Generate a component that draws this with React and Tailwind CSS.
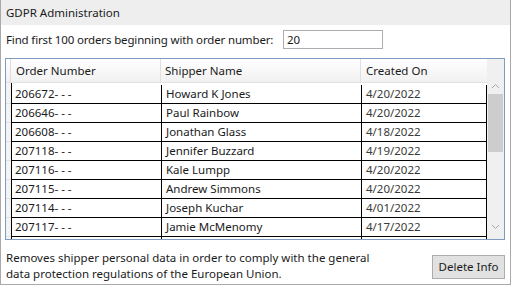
import React from "react";

const rows = [
  ["206672- - -", "Howard K Jones", "4/20/2022"],
  ["206646- - -", "Paul Rainbow", "4/20/2022"],
  ["206608- - -", "Jonathan Glass", "4/18/2022"],
  ["207118- - -", "Jennifer Buzzard", "4/19/2022"],
  ["207116- - -", "Kale Lumpp", "4/20/2022"],
  ["207115- - -", "Andrew Simmons", "4/20/2022"],
  ["207114- - -", "Joseph Kuchar", "4/01/2022"],
  ["207117- - -", "Jamie McMenomy", "4/17/2022"],
];

function Chevron({ up }) {
  return (
    <svg width="9" height="6" viewBox="0 0 9 6">
      <polyline
        points={up ? "1,5 4.5,1.5 8,5" : "1,1 4.5,4.5 8,1"}
        fill="none"
        stroke="#a8a8a8"
        strokeWidth="1"
      />
    </svg>
  );
}

export default function App() {
  return (
    <div
      className="w-[511px] h-[286px] bg-white text-[#1a1a1a] text-[11.5px] leading-[16px]"
      style={{ fontFamily: '"Noto Sans", "Segoe UI", sans-serif' }}
    >
      <div className="w-[511px] h-[285px] border border-t-0 border-[#a9a9a9] flex flex-col">
        <div className="h-[25px] bg-[#eeeeee] flex items-center pl-[5px] shrink-0">
          GDPR Administration
        </div>
        <div className="flex items-center pt-[5px] pl-[5px] h-[24px] shrink-0">
          <span className="w-[277px] shrink-0 whitespace-nowrap tracking-[-0.15px]">
            Find first 100 orders beginning with order number:
          </span>
          <div className="w-[100px] h-[19px] border border-[#abadb3] flex items-center pl-[3px]">20</div>
        </div>
        <div className="ml-[4px] mt-[9px] w-[500px] h-[182px] border border-[#7f9bbf] flex shrink-0 overflow-hidden">
          <div className="w-[481px] flex flex-col">
            <div className="h-[24px] flex shrink-0 bg-gradient-to-b from-white to-[#f1f1f1] border-b border-[#dfe3e8]">
              <div className="w-[5px] border-r border-[#dcdcdc]" />
              <div className="w-[150px] border-r border-[#e0e0e0] pl-[5px] flex items-center">Order Number</div>
              <div className="w-[200px] border-r border-[#e0e0e0] pl-[4px] flex items-center">Shipper Name</div>
              <div className="w-[125px] pl-[5px] flex items-center">Created On</div>
            </div>
            <div className="h-[2px] shrink-0 flex">
              <div className="w-[5px] bg-[#f3f3f3]" />
              <div className="w-[151px] border-l border-black" />
            </div>
            {rows.map((r, i) => (
              <div key={i} className="h-[19px] flex shrink-0">
                <div className="w-[5px] bg-[#f3f3f3] border-b border-[#e2e2e2]" />
                <div className="w-[151px] border-l border-r border-b border-black pl-[3px] flex items-center">{r[0]}</div>
                <div className="w-[200px] border-r border-b border-black pl-[4px] flex items-center">{r[1]}</div>
                <div className="w-[125px] border-r border-b border-black pl-[4px] flex items-center text-[#3a3a3a]">{r[2]}</div>
              </div>
            ))}
            <div className="flex-1 flex">
              <div className="w-[5px] bg-[#f3f3f3]" />
              <div className="w-[151px] border-l border-r border-black" />
              <div className="w-[200px] border-r border-black" />
              <div className="w-[125px] border-r border-black" />
            </div>
          </div>
          <div className="w-[17px] bg-[#f0f0f0] flex flex-col">
            <div className="h-[18px] shrink-0" />
            <div className="h-[17px] shrink-0 flex items-center justify-center">
              <Chevron up />
            </div>
            <div className="h-[58px] shrink-0 mx-[1px] bg-[#cdcdcd]" />
            <div className="flex-1" />
            <div className="h-[17px] shrink-0 flex items-center justify-center">
              <Chevron />
            </div>
            <div className="h-[4px] shrink-0" />
          </div>
        </div>
        <div className="flex mt-[10px] pl-[5px] pr-[5px]">
          <div className="w-[400px] whitespace-nowrap">
            <div>Removes shipper personal data in order to comply with the general</div>
            <div>data protection regulations of the European Union.</div>
          </div>
          <div className="flex-1" />
          <button className="mt-[5px] w-[73px] h-[24px] bg-[#e1e1e1] border border-[#adadad] flex items-center justify-center">
            Delete Info
          </button>
        </div>
      </div>
    </div>
  );
}
